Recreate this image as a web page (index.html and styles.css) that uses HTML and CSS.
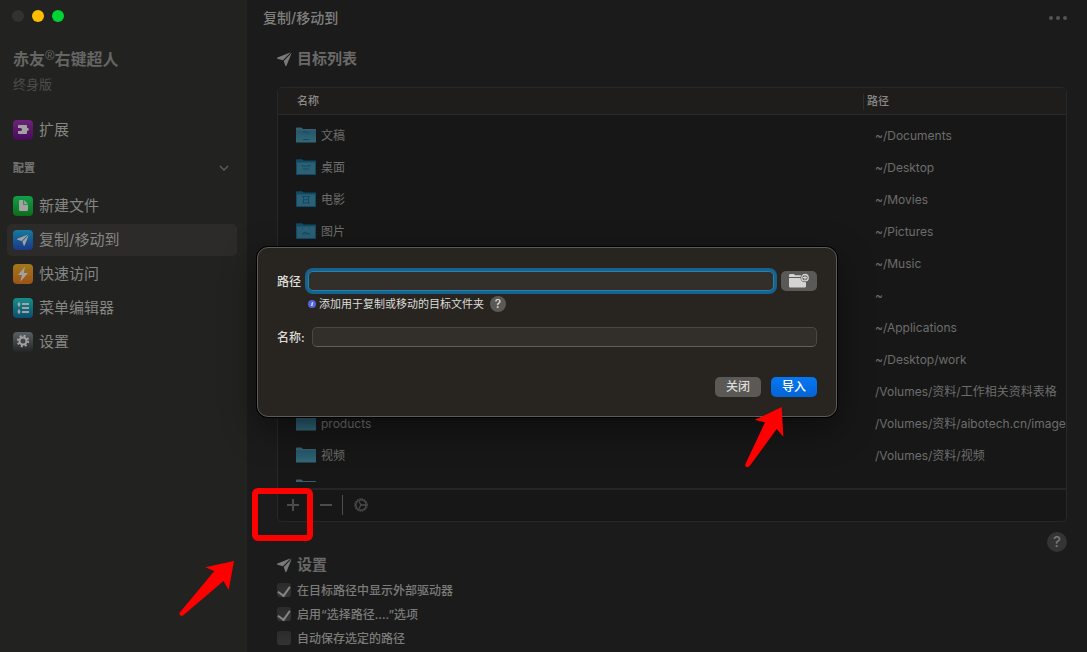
FILE: index.html
```html
<!DOCTYPE html>
<html lang="zh-CN">
<head>
    <meta charset="utf-8">
    <title>复制/移动到</title>
    <link rel="stylesheet" href="styles.css">
</head>
<body>
<svg class="defs" width="0" height="0">
    <defs>
        <linearGradient id="folderFill" x1="0" y1="0" x2="0" y2="1">
            <stop offset="0" stop-color="#23566a"/>
            <stop offset="1" stop-color="#336878"/>
        </linearGradient>
        <symbol id="plane" viewBox="0 0 16 16">
            <path d="M14.800.800.500 6.300c-.6.300-.6 1.200 0 1.400l5.800 1.700z"/>
            <path d="M15.700 1.300 7.200 10l1.700 5.300c.2.600.9.600 1.200 0z"/>
        </symbol>
        <symbol id="folder" viewBox="0 0 20 16">
            <path d="M0 15V1.500C0 .6.400.500 1 .500h4.500l1.500 1.500H19c.6 0 1 .4 1 1V15z" fill="#35606d"/>
            <path d="M0 3.500h20V15a.5.5 0 0 1-.5.500H.500A.5.5 0 0 1 0 15z" fill="url(#folderFill)"/>
        </symbol>
        <symbol id="folderBlue" viewBox="0 0 20 16">
            <path d="M0 14V1.500C0 .6.400.200 1 .200h5L7.500 1.500H19c.6 0 1 .4 1 1V15c0 .6-.4 1-1 1H1c-.6 0-1-.4-1-1z" fill="#104b66"/>
            <path d="M1 3.500h18V15H1z" fill="#2c6075"/>
        </symbol>
    </defs>
</svg>
<div class="window">
    <aside class="sidebar">
        <div class="lights"><i></i><i class="yellow"></i><i class="green"></i></div>
        <h1>赤友<sup>®</sup>右键超人</h1>
        <p class="edition">终身版</p>
        <nav>
            <a href="#ext" class="item">
                <span class="icon purple"><svg viewBox="0 0 20 20"><path d="M6 5h7c.6 0 1 .4 1 1v2c2.400-.5 2.400 3.300 0 2.800V13c0 .6-.4 1-1 1H6c-.6 0-1-.4-1-1v-2h2.500c2 0 2-3 0-3H5V6c0-.6.4-1 1-1z"/></svg></span>扩展
            </a>
            <div class="group">配置
                <svg width="10" height="6" viewBox="0 0 10 6"><path d="M1 1l4 4 4-4" fill="none" stroke="#5b5b59" stroke-width="1.500"/></svg>
            </div>
            <a href="#new" class="item">
                <span class="icon green"><svg viewBox="0 0 20 20"><path d="M7.300 4h2.900v4.800h4.800v5c0 .8-.5 1.300-1.300 1.300H7.300C6.500 15.100 6 14.600 6 13.800V5.300C6 4.500 6.500 4 7.300 4zM11.200 4l3.700 3.900h-3.700z"/></svg></span>新建文件
            </a>
            <a href="#copy" class="item active">
                <span class="icon blue"><svg viewBox="0 0 20 20"><use href="#plane" x="4" y="4" width="12" height="12"/></svg></span>复制/移动到
            </a>
            <a href="#quick" class="item">
                <span class="icon orange"><svg viewBox="0 0 20 20"><path d="M12 2.500 5 11h4l-1.700 6.800L15 9h-4.200z"/></svg></span>快速访问
            </a>
            <a href="#menu" class="item">
                <span class="icon teal"><svg viewBox="0 0 20 20"><path d="M9 5h7v2H9zM9 9h7v2H9zM9 13h7v2H9zM6 3.800l2 2.600H7v2H5v-2H4zM6 16.200l2-2.600H7v-2H5v2H4z"/></svg></span>菜单编辑器
            </a>
            <a href="#settings" class="item">
                <span class="icon gray"><svg viewBox="0 0 20 20"><circle cx="10" cy="9" r="3.500" fill="none" stroke="#a2a2a2" stroke-width="2"/><circle cx="10" cy="9" r="5.200" fill="none" stroke="#a2a2a2" stroke-width="2" stroke-dasharray="2.040 2.040"/></svg></span>设置
            </a>
        </nav>
    </aside>

    <main>
        <header class="titlebar">
            <h2>复制/移动到</h2>
            <button class="more" aria-label="更多"><i></i><i></i><i></i></button>
        </header>

        <h3><svg width="16" height="16"><use href="#plane"/></svg>目标列表</h3>
        <section class="panel">
            <div class="list">
                <table>
                    <thead>
                        <tr><th>名称</th><th class="path">路径</th></tr>
                    </thead>
                    <tbody>
                        <tr><td><svg class="folder"><use href="#folder"/><path d="M7 5h4l2 2.500M7 12.500h6" class="mark"/></svg>文稿</td><td class="path">~/Documents</td></tr>
                        <tr><td><svg class="folder"><use href="#folderBlue"/><path d="M6 5.500v1.500h8V5.500M7 10h6" class="mark"/></svg>桌面</td><td class="path">~/Desktop</td></tr>
                        <tr><td><svg class="folder"><use href="#folderBlue"/><path d="M6 5.500h8M6 12h8M7.500 5.500V12M12.500 5.500V12M7.500 8.700h5" class="mark"/></svg>电影</td><td class="path">~/Movies</td></tr>
                        <tr><td><svg class="folder"><use href="#folderBlue"/><path d="M6 5.500h1M13 5.500h1M6 11l3-2 2 1 3 1z" class="mark"/></svg>图片</td><td class="path">~/Pictures</td></tr>
                        <tr><td><svg class="folder"><use href="#folderBlue"/></svg></td><td class="path">~/Music</td></tr>
                        <tr><td><svg class="folder"><use href="#folder"/></svg></td><td class="path">~</td></tr>
                        <tr><td><svg class="folder"><use href="#folderBlue"/></svg></td><td class="path">~/Applications</td></tr>
                        <tr><td><svg class="folder"><use href="#folder"/></svg></td><td class="path">~/Desktop/work</td></tr>
                        <tr><td><svg class="folder"><use href="#folder"/></svg></td><td class="path">/Volumes/资料/工作相关资料表格</td></tr>
                        <tr><td><svg class="folder"><use href="#folder"/></svg>products</td><td class="path">/Volumes/资料/aibotech.cn/images</td></tr>
                        <tr><td><svg class="folder"><use href="#folder"/></svg>视频</td><td class="path">/Volumes/资料/视频</td></tr>
                        <tr><td><svg class="folder"><use href="#folder"/></svg></td><td class="path"></td></tr>
                    </tbody>
                </table>
            </div>
            <div class="tools">
                <button aria-label="添加"><svg width="14" height="14"><path d="M1 7h12M7 1v12"/></svg></button>
                <button aria-label="移除"><svg width="14" height="14"><path d="M1 7h12"/></svg></button>
                <span class="divider"></span>
                <button aria-label="选项"><svg width="14" height="14"><circle cx="7" cy="7" r="5.300" stroke-width="1.500"/><circle cx="7" cy="7" r="6.500" stroke-width="1" stroke-dasharray="1.300 1.250"/><path d="M5 3.500 7 7l-2 3.500M7 7h5" stroke-width="1.300"/></svg></button>
            </div>
        </section>

        <div class="help-row"><button class="help">?</button></div>

        <h3 class="settings"><svg width="16" height="16"><use href="#plane"/></svg>设置</h3>
        <label class="option"><input type="checkbox" checked><span>在目标路径中显示外部驱动器</span></label>
        <label class="option"><input type="checkbox" checked><span>启用“选择路径....”选项</span></label>
        <label class="option"><input type="checkbox"><span>自动保存选定的路径</span></label>
    </main>
</div>

<form class="dialog" role="dialog">
    <div class="field">
        <label for="path">路径</label>
        <input type="text" id="path" class="focused">
        <button type="button" class="browse" aria-label="选择文件夹">
            <svg width="22" height="16" viewBox="0 0 22 16">
                <path d="M1 4V2.500C1 1.600 1.500 1 2.400 1h3.400l1.500 1.300H13V4zM1 5h17v8c0 1-.6 1.600-1.500 1.600h-14C1.600 14.600 1 14 1 13z" fill="#d4d3d2"/>
                <circle cx="17" cy="4.700" r="4.500" fill="#5b5956"/>
                <circle cx="17" cy="4.700" r="3.200" fill="none" stroke="#d4d3d2" stroke-width="1.300"/>
                <path d="M15 4.700h4M17 2.700v4" stroke="#d4d3d2" stroke-width="1.200"/>
            </svg>
        </button>
    </div>
    <p class="hint"><i class="info">i</i>添加用于复制或移动的目标文件夹<button type="button" class="help small">?</button></p>
    <div class="field">
        <label for="name">名称:</label>
        <input type="text" id="name">
    </div>
    <div class="actions">
        <button type="button">关闭</button>
        <button type="submit" class="primary">导入</button>
    </div>
</form>

<!-- red marks over the window -->
<div class="mark-box"></div>
<svg class="arrow arrow-add" width="56" height="56" viewBox="179 561 56 56">
    <path d="M234 561l-28.700 6.300 9 3.700-34.500 41.500c-1.200 2 .8 4.200 3.200 3L223.500 581l5.200 9z"/>
</svg>
<svg class="arrow arrow-import" width="40" height="61" viewBox="745 407 40 61">
    <path d="M781.700 407l-27 13 10.300 2.300-19.700 42c-.7 2.500 2.400 4 4.400 1.700l27-37 6.600 7.700z"/>
</svg>
</body>
</html>
```
FILE: styles.css
```css
* {
    box-sizing: border-box;
}

body {
    margin: 0;
    height: 100vh;
    overflow: hidden;
    position: relative;
    background: #1b1b1b;
    color: #7b7b7a;
    font-family: Inter, "Noto Sans CJK SC", sans-serif;
    font-size: 12px;
    line-height: 16px;
}

h1, h2, h3, p {
    margin: 0;
}

button {
    padding: 0;
    border: 0;
    background: none;
    color: inherit;
    font: inherit;
}

.defs {
    position: absolute;
}

.window {
    display: grid;
    grid-template-columns: 247px 1fr;
    height: 100%;
}

/* sidebar */
.sidebar {
    background: #222220;
    padding: 10px 10px 0 7px;
}

.lights {
    display: flex;
    gap: 8px;
    padding-left: 5px;
}

.lights i {
    width: 12px;
    height: 12px;
    border-radius: 50%;
    background: #323232;
}

.lights .yellow {
    background: #ffbd00;
}

.lights .green {
    background: #00d432;
}

h1 {
    margin: 25px 0 0 6px;
    font-size: 16px;
    font-weight: 700;
    line-height: 24px;
    color: #656563;
}

h1 sup {
    font-family: "Liberation Sans", sans-serif;
    font-size: 13px;
    font-weight: 400;
    line-height: 0;
    vertical-align: 5px;
}

.edition {
    margin: 3px 0 0 6px;
    font-size: 13px;
    line-height: 20px;
    color: #4e4e4c;
}

nav {
    display: flex;
    flex-direction: column;
    gap: 2px;
    margin-top: 20px;
}

.item {
    display: flex;
    align-items: center;
    gap: 6px;
    height: 32px;
    padding-left: 6px;
    border-radius: 5px;
    font-size: 15px;
    color: #858583;
    text-decoration: none;
}

.item.active {
    background: #2c2b29;
}

.icon {
    width: 20px;
    height: 20px;
    border-radius: 4px;
}

.icon svg {
    display: block;
    fill: #a2a2a2;
}

.icon.purple { background: linear-gradient(#6b2478, #480b5c); }
.icon.green { background: linear-gradient(#11a04b, #0d6c19); }
.icon.blue { background: linear-gradient(#147b9e, #1c3787); }
.icon.orange { background: linear-gradient(#a1781a, #9c5317); }
.icon.teal { background: linear-gradient(#148f8b, #0c4d70); }
.icon.gray { background: linear-gradient(#596164, #242525); }

.group {
    display: flex;
    align-items: center;
    justify-content: space-between;
    height: 40px;
    padding: 0 8px 0 6px;
    font-size: 11px;
    font-weight: 900;
    color: #70706e;
}

/* main */
main {
    padding: 0 20px 0 30px;
    min-width: 0;
}

.titlebar {
    display: flex;
    align-items: center;
    justify-content: space-between;
    height: 36px;
    margin-left: -14px;
}

h2 {
    font-size: 14px;
    font-weight: 500;
    color: #80807f;
}

.more {
    display: flex;
    gap: 3px;
}

.more i {
    width: 4px;
    height: 4px;
    border-radius: 50%;
    background: #535353;
}

h3 {
    display: flex;
    align-items: center;
    gap: 5px;
    height: 22px;
    margin: 12px 0 17px;
    font-size: 15px;
    font-weight: 700;
    color: #6a6968;
}

h3 svg {
    width: 15px;
    fill: #7a7a79;
}

.panel {
    border: 1px solid #282828;
    border-radius: 5px;
    background: #171717;
    overflow: hidden;
}

.list {
    height: 394px;
    margin-bottom: 6px;
    overflow: hidden;
}

table {
    width: 100%;
    table-layout: fixed;
    border-collapse: separate;
    border-spacing: 0;
}

th {
    height: 27px;
    padding: 0 0 0 19px;
    border-bottom: 1px solid #2b2a29;
    background: #1e1d1b;
    font-size: 11px;
    font-weight: 500;
    text-align: left;
    color: #8b8a88;
}

th.path {
    width: 203px;
    padding-left: 0;
}

th.path::before {
    content: "";
    display: inline-block;
    width: 1px;
    height: 16px;
    margin-right: 3px;
    background: #2e2d2c;
    vertical-align: middle;
}

tbody::before {
    content: "";
    display: block;
    height: 4px;
}

td {
    height: 32px;
    padding: 2px 0 0 18px;
    white-space: nowrap;
    overflow: hidden;
    color: #6d6d6c;
}

td.path {
    padding-left: 12px;
}

.folder {
    width: 20px;
    height: 16px;
    margin: -4px 5px 0 0;
    vertical-align: middle;
}

.folder .mark {
    fill: none;
    stroke: #104b66;
}

.tools {
    display: flex;
    align-items: center;
    height: 33px;
    padding: 0 0 2px 8px;
    border-top: 2px solid #252525;
}

.tools button {
    display: flex;
    margin-right: 19px;
}

.tools button:nth-child(2) {
    margin-right: 9px;
}

.tools svg {
    fill: none;
    stroke: #4c4c4c;
    stroke-width: 2px;
}

.divider {
    width: 1px;
    height: 20px;
    margin-right: 11px;
    background: #4c4c4c;
}

.help-row {
    display: flex;
    justify-content: flex-end;
    margin-top: 10px;
}

.help {
    width: 20px;
    height: 20px;
    border-radius: 50%;
    background: #343434;
    color: #777;
    font-size: 15px;
    font-weight: 500;
    line-height: 20px;
    text-align: center;
}

h3.settings {
    margin: 2px 0;
}

.option {
    display: flex;
    align-items: center;
    gap: 6px;
    height: 24px;
    font-weight: 500;
}

.option span {
    padding-top: 2px;
}

.option input {
    appearance: none;
    width: 14px;
    height: 14px;
    margin: 0;
    border-radius: 3px;
    background: linear-gradient(#2b2b2b, #343434);
}

.option input:checked {
    display: flex;
    justify-content: center;
    padding-top: 1px;
}

.option input:checked::before {
    content: "";
    width: 6px;
    height: 10px;
    border: solid #858585;
    border-width: 0 2px 2px 0;
    transform: rotate(35deg);
}

/* dialog */
.dialog {
    position: absolute;
    left: 257px;
    top: 247px;
    width: 580px;
    padding: 23px 19px 19px;
    border: 1px solid #5d5b58;
    border-radius: 11px;
    background: #282520;
    box-shadow: 0 0 0 1px #000, 0 12px 36px rgba(0, 0, 0, .45);
    color: #dddcdb;
    font-weight: 500;
}

.field {
    display: flex;
    align-items: center;
    gap: 7px;
}

.field label {
    line-height: 18px;
    padding-top: 2px;
}

.field input {
    flex: 1;
    min-width: 0;
    height: 20px;
    padding: 0 6px;
    border: 1px solid #4b4844;
    border-bottom-color: #625f5b;
    border-radius: 5px;
    outline: 0;
    background: #322e2a;
    color: #dddcdb;
    font: inherit;
}

.field input.focused {
    border-color: #2480ad;
    box-shadow: 0 0 0 3px #17628e;
}

.browse {
    display: flex;
    align-items: center;
    justify-content: center;
    width: 36px;
    height: 20px;
    border-radius: 5px;
    background: #5b5956;
}

.hint {
    display: flex;
    align-items: center;
    gap: 3px;
    margin: 5px 0 15px 31px;
    font-size: 11px;
    font-weight: 400;
}

.info {
    width: 8px;
    height: 8px;
    border-radius: 50%;
    background: #5661dc;
    color: #fff;
    font: italic 700 7px/8px "Liberation Serif", serif;
    text-align: center;
}

.help.small {
    width: 16px;
    height: 16px;
    margin-left: 3px;
    background: #5b5956;
    color: #dddcdb;
    font-size: 12px;
    line-height: 16px;
}

.actions {
    display: flex;
    justify-content: flex-end;
    gap: 10px;
    margin-top: 30px;
}

.actions button {
    width: 46px;
    height: 20px;
    border-radius: 5px;
    background: #5b5956;
}

.actions .primary {
    background: linear-gradient(#0677f2, #0464d6);
    color: #fff;
}

/* red marks */
.mark-box {
    position: absolute;
    left: 252px;
    top: 488px;
    width: 61px;
    height: 53px;
    border: 6px solid #f00;
    border-radius: 6px;
}

.arrow {
    position: absolute;
    fill: #f00;
}

.arrow-add {
    left: 179px;
    top: 561px;
}

.arrow-import {
    left: 745px;
    top: 407px;
}
```
